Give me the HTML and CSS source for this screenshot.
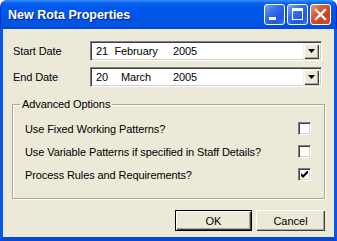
FILE: index.html
```html
<!DOCTYPE html>
<html lang="en">
<head>
    <meta charset="UTF-8">
    <title>New Rota Properties</title>
    <link rel="stylesheet" href="styles.css">
</head>
<body>
    <div class="window">
        <div class="titlebar">
            <span class="title">New Rota Properties</span>
            <div class="controls">
                <span class="ctl">
                    <svg width="19" height="19" viewBox="0 0 19 19"><rect x="4" y="12" width="7" height="3" fill="#fff"/></svg>
                </span>
                <span class="ctl">
                    <svg width="19" height="19" viewBox="0 0 19 19"><path d="M4 3h11v12H4z M5 6v8h9V6z" fill="#fff" fill-rule="evenodd"/></svg>
                </span>
                <span class="ctl close">
                    <svg width="19" height="19" viewBox="0 0 19 19"><path d="M5 5L14 14M14 5L5 14" stroke="#fff" stroke-width="2.4" stroke-linecap="square"/></svg>
                </span>
            </div>
        </div>
        <div class="frame">
            <div class="client">
                <div class="field-row">
                    <label>Start Date</label>
                    <div class="combo">
                        <div class="combo-text">
                            <span class="day">21</span><span class="month">February</span><span class="year">2005</span>
                        </div>
                        <span class="drop"><svg width="7" height="4" viewBox="0 0 7 4"><path d="M0 0h7L3.5 4z" fill="#000"/></svg></span>
                    </div>
                </div>
                <div class="field-row">
                    <label>End Date</label>
                    <div class="combo">
                        <div class="combo-text">
                            <span class="day">20</span><span class="month">March</span><span class="year">2005</span>
                        </div>
                        <span class="drop"><svg width="7" height="4" viewBox="0 0 7 4"><path d="M0 0h7L3.5 4z" fill="#000"/></svg></span>
                    </div>
                </div>

                <fieldset class="group">
                    <legend>Advanced Options</legend>
                    <div class="option">
                        <span>Use Fixed Working Patterns?</span>
                        <span class="check"></span>
                    </div>
                    <div class="option">
                        <span>Use Variable Patterns if specified in Staff Details?</span>
                        <span class="check"></span>
                    </div>
                    <div class="option">
                        <span>Process Rules and Requirements?</span>
                        <span class="check">
                            <svg width="7" height="7" viewBox="0 0 7 7"><path d="M0 2v3l2 2 5-5V-1L2 4z" fill="#000"/></svg>
                        </span>
                    </div>
                </fieldset>

                <div class="actions">
                    <button class="btn default">OK</button>
                    <button class="btn cancel">Cancel</button>
                </div>
            </div>
        </div>
    </div>
</body>
</html>
```

FILE: styles.css
```css
* {
    margin: 0;
    padding: 0;
    box-sizing: border-box;
}

body {
    background: #fff;
    font-family: "Liberation Sans", Arial, sans-serif;
    font-size: 11px;
    letter-spacing: -0.1px;
    color: #000;
}

/* Window frame */
.window {
    width: 337px;
    height: 241px;
    display: flex;
    flex-direction: column;
}

.titlebar {
    height: 29px;
    display: flex;
    align-items: center;
    justify-content: space-between;
    padding: 0 5px 0 7px;
    border-radius: 7px 7px 0 0;
    background: linear-gradient(#3d8ffc 0, #0a63f0 3px, #0058ee 7px, #0056e8 55%, #0054e3 85%, #0048d8 100%);
    border-left: 1px solid #0030c8;
    border-right: 1px solid #0030c8;
}

.title {
    color: #fff;
    font-weight: bold;
    font-size: 12.5px;
    letter-spacing: 0;
    text-shadow: 1px 1px 0 #0a1c8c;
    padding-top: 1px;
}

.controls {
    display: flex;
    gap: 2px;
}

.ctl {
    width: 21px;
    height: 21px;
    border: 1px solid #fff;
    border-radius: 3px;
    background: linear-gradient(135deg, #7aa5f8 0, #3a72ec 35%, #2258e0 70%, #3c70ea 100%);
    display: flex;
}

.ctl.close {
    background: linear-gradient(135deg, #ee9b7c 0, #db5a31 35%, #c8431b 70%, #d1542c 100%);
}

.frame {
    flex: 1;
    display: flex;
    border-left: 3px solid #0857e6;
    border-right: 3px solid #0857e6;
    border-bottom: 4px solid #0848d6;
}

.client {
    flex: 1;
    background: #ece9d8;
    display: flex;
    flex-direction: column;
    padding: 12px 9px 6px 9px;
}

/* Date rows */
.field-row {
    display: flex;
    align-items: center;
    height: 20px;
    padding-left: 1px;
    margin-bottom: 6px;
}

.field-row label {
    width: 77px;
}

.combo {
    width: 232px;
    height: 20px;
    display: flex;
    align-items: center;
    background: #fff;
    border-top: 1px solid #808080;
    border-left: 1px solid #808080;
    border-bottom: 1px solid #fff;
    border-right: 1px solid #fff;
    box-shadow: inset 1px 1px 0 #404040, inset -1px -1px 0 #d4d0c8;
    padding: 2px 2px 2px 5px;
}

.combo-text {
    flex: 1;
    display: flex;
}

.day {
    width: 18px;
}

.month {
    width: 44px;
    text-align: center;
}

.year {
    margin-left: 15px;
}

.drop {
    width: 16px;
    height: 16px;
    background: #ece9d8;
    display: flex;
    align-items: center;
    justify-content: center;
    box-shadow: inset 1px 1px 0 #f1efe2, inset 2px 2px 0 #fff, inset -1px -1px 0 #404040, inset -2px -2px 0 #aca899;
}

/* Advanced options group */
.group {
    margin-top: 5px;
    border: 1px solid #aca899;
    box-shadow: 1px 1px 0 #fff, inset 1px 1px 0 #fff;
    padding: 6px 13px 12px 7px;
}

.group legend {
    padding: 0 2px;
    line-height: 13px;
    background: #ece9d8;
}

.option {
    display: flex;
    align-items: center;
    justify-content: space-between;
    height: 23px;
    padding-left: 5px;
}

.check {
    width: 13px;
    height: 13px;
    background: #fff;
    border-top: 1px solid #808080;
    border-left: 1px solid #808080;
    border-bottom: 1px solid #fff;
    border-right: 1px solid #fff;
    box-shadow: inset 1px 1px 0 #404040, inset -1px -1px 0 #d4d0c8;
    display: flex;
    align-items: center;
    justify-content: center;
}

/* Buttons */
.actions {
    margin-top: auto;
    display: flex;
    justify-content: flex-end;
    gap: 4px;
}

.btn {
    height: 21px;
    font-family: "Liberation Sans", Arial, sans-serif;
    font-size: 11px;
    color: #000;
    background: #ece9d8;
    border: none;
    box-shadow: inset 1px 1px 0 #fff, inset -1px -1px 0 #404040, inset -2px -2px 0 #aca899;
}

.btn.default {
    width: 77px;
    border: 1px solid #000;
}

.btn.cancel {
    width: 69px;
}
```
